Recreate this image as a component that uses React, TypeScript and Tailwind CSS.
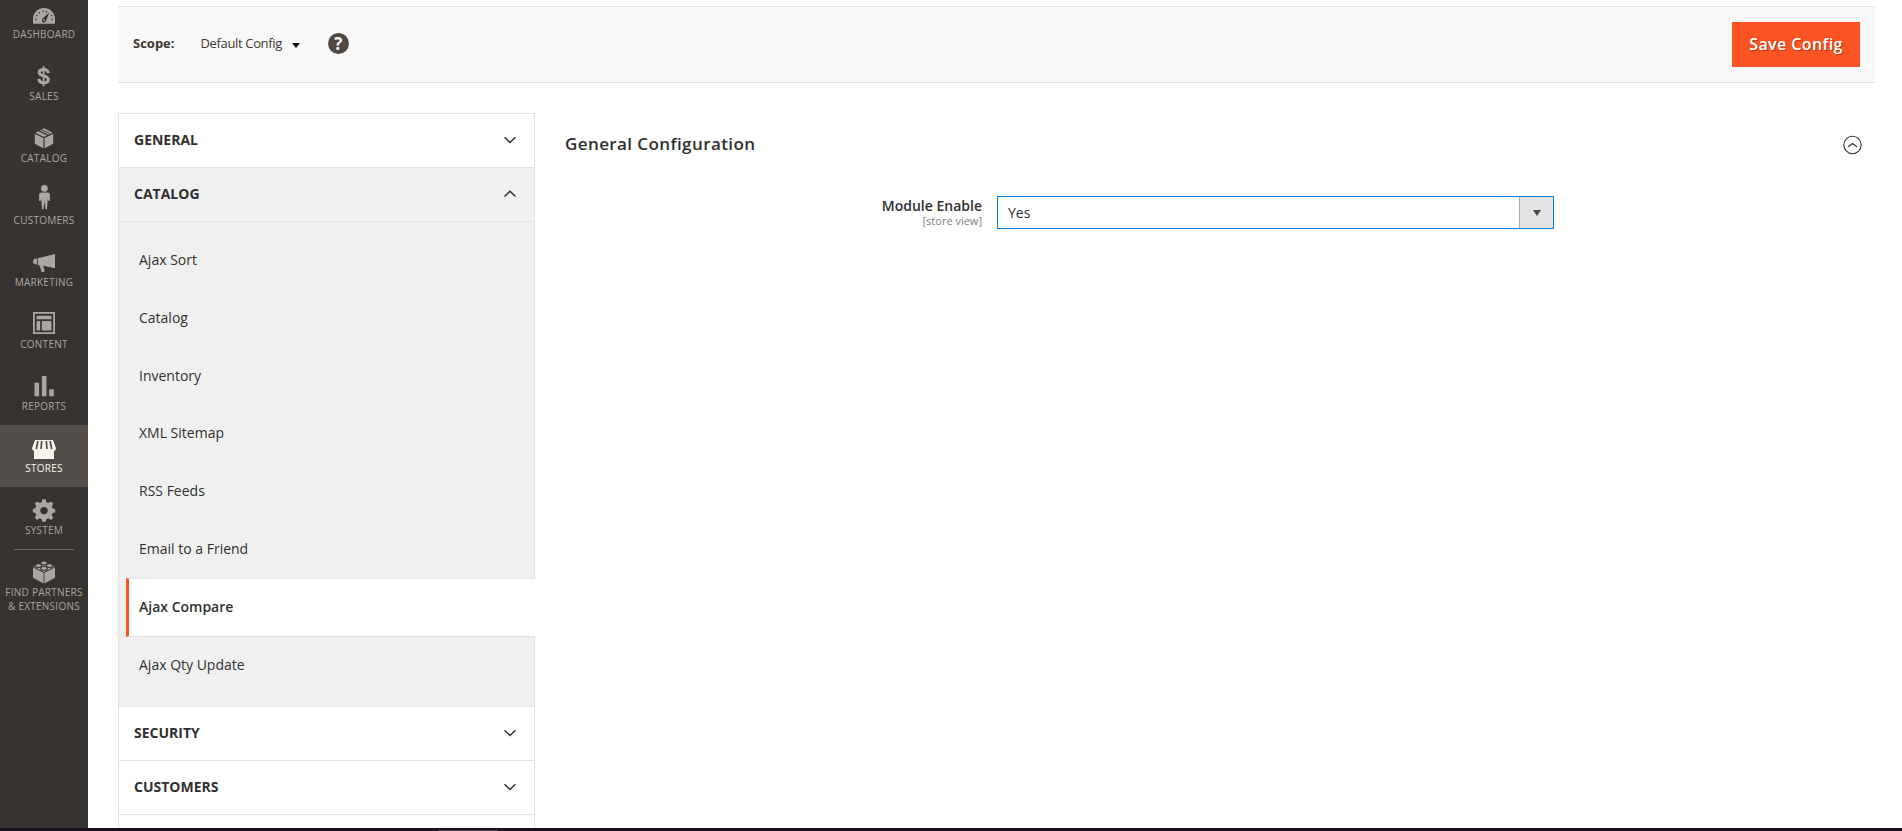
import { ReactNode, useState } from "react";

interface MenuItem {
  label: string;
  icon: ReactNode;
}

interface Section {
  title: string;
  items?: string[];
}

const menu: MenuItem[] = [
  {
    label: "Dashboard",
    icon: (
      <>
        <path fill="currentColor" d="M1 20.8V16a11 11 0 0 1 22 0v4.8z" />
        <g fill="#373330">
          <circle cx="3.8" cy="16.4" r=".8" />
          <circle cx="4.7" cy="12.6" r=".8" />
          <circle cx="7.3" cy="9.7" r=".8" />
          <circle cx="11" cy="8.2" r=".8" />
          <circle cx="14.5" cy="8.8" r=".8" />
          <circle cx="19.5" cy="12.6" r=".8" />
          <circle cx="20.2" cy="16.4" r=".8" />
          <path d="M17.2 9.4l-3 8.2a2.2 2.2 0 1 1-3.8-1.8z" />
        </g>
        <circle cx="12.1" cy="17" r=".9" fill="currentColor" />
      </>
    ),
  },
  {
    label: "Sales",
    icon: (
      <g fill="none" stroke="currentColor">
        <path
          strokeWidth="3"
          d="M16.2 8.2C16 5.8 14.2 4.6 11.6 4.6C9 4.6 7.2 5.8 7.2 7.7C7.2 12 16.3 9.8 16.3 14.4C16.3 16.6 14.4 17.8 11.7 17.8C8.8 17.8 6.9 16.5 6.8 13.9"
        />
        <path strokeWidth="1.8" d="M11.6 1v20.4" />
      </g>
    ),
  },
  {
    label: "Catalog",
    icon: (
      <g fill="currentColor">
        <path d="M2.8 7l8.6 4v10.3l-8.6-4.5zM21.2 7l-8.6 4v10.3l8.6-4.5z" />
        <path d="M3.4 5.7L6.6 4.2 15 8.4 12 9.9zM8 3.6L12 1.2l8.6 4.5-4.2 2z" />
        <path stroke="#373330" strokeWidth=".9" d="M9.6 2.6l8.4 4.2" />
      </g>
    ),
  },
  {
    label: "Customers",
    icon: (
      <g fill="currentColor">
        <circle cx="12.4" cy="-.6" r="3.4" />
        <path d="M9.6 3.6h5.8c1.6 0 2.5 1 2.5 2.6v5.2c0 .9-1.4.9-1.6 0l-.5-2-.7 10c-.1 1.2-1.5 1.2-1.7 0l-.9-6.8-.9 6.8c-.2 1.2-1.6 1.2-1.7 0l-.7-10-.5 2c-.2.9-1.6.9-1.6 0V6.2c0-1.6.9-2.6 2.5-2.6z" />
      </g>
    ),
  },
  {
    label: "Marketing",
    icon: (
      <path
        fill="currentColor"
        d="M23 3v14.2l-11.8-2.4 1.6 5.6-3 .9-2.3-6.9-1.7-.4V7.2zM4.9 7.6v5.8l-2.6-.3C.7 12.3.7 8.7 2.3 8z"
      />
    ),
  },
  {
    label: "Content",
    icon: (
      <g fill="currentColor">
        <path fillRule="evenodd" d="M1-1h22v22H1zM2.8.8v18.4h18.4V.8z" />
        <path d="M4.6 2.7h14.8v3.6H4.6zM4.6 8h3.6v9.4H4.6zM9.9 8h9.5v9.4H9.9z" />
      </g>
    ),
  },
  {
    label: "Reports",
    icon: (
      <path
        fill="currentColor"
        d="M2.5 7.7h4.6v13.6H2.5zM9.9.9h4.6v20.4H9.9zM17.2 14.3h4.6v7h-4.6z"
      />
    ),
  },
  {
    label: "Stores",
    icon: (
      <>
        <path
          fill="currentColor"
          d="M3 3h18l3 8.2c0 1.6-1 2.6-2 2.6V22H2v-8.2c-1-.2-2-1-2-2.6z"
        />
        <path
          stroke="#524d49"
          strokeWidth="1.7"
          d="M5.9 4L4.3 12M9.7 4L9 12M14.3 4l.7 8M18.1 4l1.6 8"
        />
      </>
    ),
  },
  {
    label: "System",
    icon: (
      <path
        fill="currentColor"
        fillRule="evenodd"
        d="M10.4.3h3.2l.7 2.9 2.2.9L19 2.5l2.3 2.3-1.6 2.5.9 2.2 2.6.7v3.2l-2.6.7-.9 2.2 1.6 2.5L19 20.9l-2.5-1.6-2.2.9-.7 2.6h-3.2l-.7-2.6-2.2-.9L5 20.9l-2.3-2.3 1.6-2.5-.9-2.2-2.6-.7V10l2.6-.7.9-2.2L2.7 4.8 5 2.5l2.5 1.6 2.2-.9zM12 7.9a3.7 3.7 0 1 0 0 7.4a3.7 3.7 0 1 0 0-7.4z"
      />
    ),
  },
];

const sections: Section[] = [
  { title: "General" },
  {
    title: "Catalog",
    items: [
      "Ajax Sort",
      "Catalog",
      "Inventory",
      "XML Sitemap",
      "RSS Feeds",
      "Email to a Friend",
      "Ajax Compare",
      "Ajax Qty Update",
    ],
  },
  { title: "Security" },
  { title: "Customers" },
];

function MenuIcon({ children }: { children: ReactNode }) {
  return (
    <svg viewBox="0 0 24 24" className="h-6 w-6 shrink-0 overflow-visible">
      {children}
    </svg>
  );
}

function Chevron({ up }: { up?: boolean }) {
  return (
    <svg
      viewBox="0 0 12 8"
      className="h-2 w-3"
      fill="none"
      stroke="#303030"
      strokeWidth="1.5"
    >
      <path d={up ? "M.5 6.5L6 1.2l5.5 5.3" : "M.5 1.2L6 6.5l5.5-5.3"} />
    </svg>
  );
}

function Sidebar() {
  return (
    <nav className="h-full w-[88px] shrink-0 bg-[#373330] text-[10px] leading-[14px] tracking-[0.25px] text-[#aaa6a0] uppercase">
      <ul className="-mt-[9px]">
        {menu.map((item) => (
          <li
            key={item.label}
            className={`flex h-[62px] flex-col items-center pt-3 ${
              item.label === "Stores" ? "bg-[#524d49] text-[#f7f3eb]" : ""
            }`}
          >
            <MenuIcon>{item.icon}</MenuIcon>
            <span>{item.label}</span>
          </li>
        ))}
      </ul>
      <div className="mx-3.5 h-px bg-[#736963]" />
      {/* Partners */}
      <div className="flex flex-col items-center pt-[11px] text-center">
        <MenuIcon>
          <g fill="currentColor">
            <path d="M1 6.5l10.6 5.3v10.6L1 16.8zM23 6.5l-10.6 5.3v10.6L23 16.8z" />
            <path d="M1.5 5.6L12 .8l10.5 4.8L12 10.9z" />
            <g stroke="#373330" strokeWidth="1.1">
              <ellipse cx="12" cy="1.9" rx="3.3" ry="1.9" />
              <ellipse cx="6.5" cy="4.6" rx="3.3" ry="1.9" />
              <ellipse cx="17.5" cy="4.6" rx="3.3" ry="1.9" />
              <ellipse cx="12" cy="7.4" rx="3.3" ry="1.9" />
            </g>
          </g>
        </MenuIcon>
        <span>
          Find Partners
          <br />& Extensions
        </span>
      </div>
    </nav>
  );
}

function ScopeBar() {
  return (
    <header className="flex h-[77px] items-center border-y border-[#e3e3e3] bg-[#f8f8f8] px-[15px]">
      <div className="flex items-center pb-0.5">
        <span className="text-[13px] font-bold text-[#41362f]">Scope:</span>
        <button className="ml-[26px] flex items-center text-[13px] tracking-[-0.35px] text-[#41362f]">
          Default Config
          <svg viewBox="0 0 8 5" className="mt-1 ml-2.5 h-[5px] w-2">
            <path d="M0 0h8L4 5z" fill="#000" />
          </svg>
        </button>
        <span className="ml-7 flex h-[21px] w-[21px] items-center justify-center rounded-full bg-[#514943] text-[17px] font-bold text-[#f8f8f8]">
          ?
        </span>
      </div>
      <button className="ml-auto h-[45px] w-32 bg-[#f95421] pb-0.5 text-base font-semibold tracking-[0.4px] text-white [text-shadow:1px_1px_0_rgba(0,0,0,0.3)]">
        Save Config
      </button>
    </header>
  );
}

function ConfigNav() {
  const [active, setActive] = useState("Ajax Compare");

  return (
    <div className="h-[800px] w-[417px] shrink-0 border border-[#e3e3e3]">
      {sections.map((section) => (
        <div key={section.title} className="border-b border-[#e3e3e3]">
          <div
            className={`flex h-[53px] items-center justify-between pr-[18px] pb-0.5 pl-[15px] ${
              section.items ? "bg-[#f0f0f0]" : ""
            }`}
          >
            <strong className="text-sm font-bold uppercase">
              {section.title}
            </strong>
            <Chevron up={!!section.items} />
          </div>
          {section.items && (
            <ul className="border-t border-[#e3e3e3] bg-[#f0f0f0] pt-[9px] pb-[12.4px] pl-[7px]">
              {section.items.map((item) => (
                <li
                  key={item}
                  onClick={() => setActive(item)}
                  className={`flex items-center text-sm ${
                    item === active
                      ? "relative -mr-px -mb-px h-[58.85px] border-y border-l-3 border-y-[#e3e3e3] border-l-[#f95421] bg-white pb-px pl-[10px] font-semibold"
                      : "h-[57.85px] pl-[13px]"
                  }`}
                >
                  {item}
                </li>
              ))}
            </ul>
          )}
        </div>
      ))}
    </div>
  );
}

function ConfigPanel() {
  return (
    <section className="flex-1 pt-[17px] pr-3 pl-[30px]">
      <div className="flex items-center justify-between">
        <h2 className="text-[17px] leading-7 font-semibold tracking-[0.4px]">
          General Configuration
        </h2>
        <svg
          viewBox="0 0 20 20"
          className="mt-0.5 h-5 w-5"
          fill="none"
          stroke="#41362f"
        >
          <circle cx="9.5" cy="10" r="8.7" strokeWidth="1.1" />
          <path d="M5 11.7L9.5 8.5l4.5 3.2" strokeWidth="1.4" />
        </svg>
      </div>
      <div className="mt-[38px] flex">
        <div className="w-[417px] text-right">
          <div className="text-sm leading-[19px] font-semibold">
            Module Enable
          </div>
          <div className="text-[11px] leading-3 text-[#808080]">
            [store view]
          </div>
        </div>
        <div className="ml-[15px] flex h-[33px] w-[557px] border border-[#007bdb] text-sm">
          <span className="flex flex-1 items-center pl-2.5">Yes</span>
          <span className="flex w-[34px] items-center justify-center border-l border-[#adadad] bg-[#e3e3e3]">
            <svg viewBox="0 0 8 6" className="h-1.5 w-2">
              <path d="M0 0h8L4 6z" fill="#514943" />
            </svg>
          </span>
        </div>
      </div>
    </section>
  );
}

export default function App() {
  return (
    <div className="flex h-[831px] flex-col overflow-hidden bg-white font-['Open_Sans',sans-serif] text-[#303030]">
      <div className="flex h-[828px] overflow-hidden">
        <Sidebar />
        <main className="flex-1 pt-1.5 pr-[27px] pl-[30px]">
          <ScopeBar />
          <div className="mt-[30px] flex">
            <ConfigNav />
            <ConfigPanel />
          </div>
        </main>
      </div>
      {/* Bottom edge */}
      <div className="flex h-[3px] items-end bg-[#1b1020]">
        <div className="ml-[438px] h-px w-[60px] bg-[#4a424d]" />
      </div>
    </div>
  );
}
